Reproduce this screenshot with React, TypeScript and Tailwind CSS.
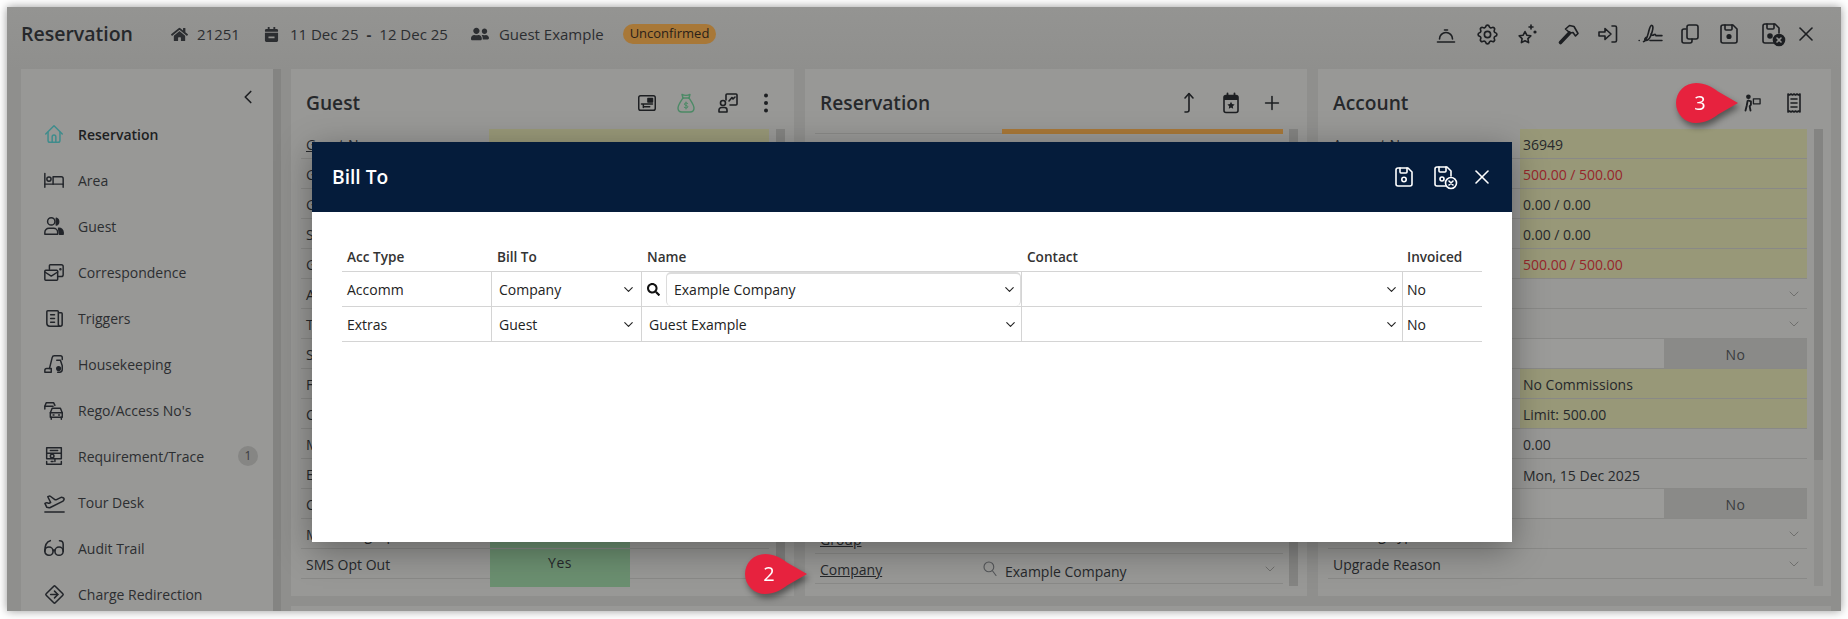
import { ReactNode } from 'react';
import { ChevronDown, ChevronLeft, Plus, X } from 'lucide-react';
import { FaCalendarMinus, FaHome, FaSearch, FaUserFriends } from 'react-icons/fa';
import { LuPlaneTakeoff } from 'react-icons/lu';
import { TbDirectionSign, TbNews, TbSettings } from 'react-icons/tb';

function Ico({ size = 22, sw = 1.6, children }: { size?: number; sw?: number; children: ReactNode }) {
  return (
    <svg
      width={size}
      height={size}
      viewBox="0 0 24 24"
      fill="none"
      stroke="currentColor"
      strokeWidth={sw}
      strokeLinecap="round"
      strokeLinejoin="round"
      aria-hidden="true"
    >
      {children}
    </svg>
  );
}

const SaveIcon = ({ dot }: { dot?: boolean }) => (
  <Ico size={24}>
    <path d="M6 3h10l4 4v12a2 2 0 0 1-2 2H6a2 2 0 0 1-2-2V5a2 2 0 0 1 2-2z" />
    <path d="M8 3v4a1 1 0 0 0 1 1h5a1 1 0 0 0 1-1V3" />
    {dot ? <circle cx="12" cy="14.5" r="1.8" fill="currentColor" /> : <circle cx="12" cy="14.5" r="2.2" />}
  </Ico>
);

const SaveCloseIcon = ({ dark }: { dark?: boolean }) => (
  <svg width="27" height="27" viewBox="0 0 27 27" fill="none" stroke="currentColor" strokeWidth="1.6" strokeLinecap="round" strokeLinejoin="round" aria-hidden="true">
    <path d="M15 22H6a2 2 0 0 1-2-2V5a2 2 0 0 1 2-2h10l4 4v5" />
    <path d="M8 3v4a1 1 0 0 0 1 1h5a1 1 0 0 0 1-1V3" />
    <circle cx="11" cy="15" r="2" fill={dark ? 'currentColor' : 'none'} />
    <circle cx="20" cy="19" r="5.5" fill={dark ? 'currentColor' : '#051c3b'} />
    <path d="M18 17l4 4m0-4l-4 4" stroke={dark ? '#929290' : 'currentColor'} />
  </svg>
);

const BellIcon = () => (
  <Ico size={24}>
    <path d="M5.5 17a6.5 6.5 0 0 1 13 0" />
    <path d="M10.5 8h3" />
    <path d="M3.5 20h17" />
  </Ico>
);

const StarsIcon = () => (
  <Ico size={24}>
    <path d="M10 9.5l1.8 3.7 4 .6-2.9 2.8.7 4-3.6-1.9-3.6 1.9.7-4-2.9-2.8 4-.6z" />
    <path d="M16 3v4M14 5h4" />
    <circle cx="20" cy="10" r=".8" fill="currentColor" />
  </Ico>
);

const HammerIcon = () => (
  <Ico size={24}>
    <path d="M4.500 20.500L13.500 11" strokeWidth="3.600" />
    <path d="M9.500 7l4-3.500 4.500 1 4 7-2.500 2.500-2.500-3.500-3 .5z" />
  </Ico>
);

const LoginIcon = () => (
  <Ico size={24}>
    <path d="M3 10h6V6.5l6 5.5-6 5.5V14H3z" />
    <path d="M16 4h3a1.5 1.5 0 0 1 1.5 1.5v13A1.5 1.5 0 0 1 19 20h-3" />
  </Ico>
);

const SignIcon = () => (
  <Ico size={26} sw={1.5}>
    <path d="M2 18h.01" />
    <path d="M6 19c2.500 0 3.500-4 4.500-8S12 4 13.500 4s1.500 2.500.5 6-3 8-5.500 8-1-3 1-3.500" />
    <path d="M13 12c.5 1.500 1.500 1.500 3 .5 1-.7 1 .5 1.500 1H23" />
    <path d="M12 18h11" />
  </Ico>
);

const CopyIcon = () => (
  <Ico size={24}>
    <path d="M8 7H6a2 2 0 0 0-2 2v10a2 2 0 0 0 2 2h6a2 2 0 0 0 2-2v-2" />
    <rect x="9" y="3" width="11" height="14" rx="2" />
  </Ico>
);

const CardIcon = () => (
  <Ico size={22}>
    <rect x="3" y="4" width="18" height="16" rx="2" />
    <rect x="13" y="7" width="5" height="4" fill="currentColor" />
    <path d="M6 13h12M8 16h7M8 13v4" />
  </Ico>
);

const BagIcon = () => (
  <Ico size={24} sw={1.4}>
    <path d="M9 7L8 3.5c2 1 6 1 8 0L15 7" />
    <path d="M9 7h6" />
    <path d="M9 7c-2 3-5 7-5 10 0 3 2 4 4 4h8c2 0 4-1 4-4 0-3-3-7-5-10" />
    <path d="M13.8 12.5c-.6-.9-3.4-1-3.4.6 0 1.700 3.500 1 3.500 2.700 0 1.500-2.800 1.500-3.700.5M12 11v7" strokeWidth="1" />
  </Ico>
);

const PersonChartIcon = () => (
  <Ico size={24}>
    <path d="M10 9V4a1 1 0 0 1 1-1h9a1 1 0 0 1 1 1v9a1 1 0 0 1-1 1h-6" />
    <path d="M13 10l3-3.500 1 1.500 2-2" />
    <circle cx="7" cy="12" r="2.500" />
    <path d="M3 21v-2a2.500 2.500 0 0 1 2.500-2.500h3A2.500 2.500 0 0 1 11 19v2z" />
  </Ico>
);

const DotsIcon = () => (
  <svg width="6" height="20" viewBox="0 0 6 20" fill="currentColor" aria-hidden="true">
    <circle cx="3" cy="2.500" r="2" />
    <circle cx="3" cy="10" r="2" />
    <circle cx="3" cy="17.500" r="2" />
  </svg>
);

const UpFootIcon = () => (
  <Ico size={24}>
    <path d="M8 7l4-4.500L16 7" />
    <path d="M12 3v16a2 2 0 0 1-2 2H8" />
  </Ico>
);

const CalStarIcon = () => (
  <svg width="24" height="24" viewBox="0 0 24 24" fill="none" aria-hidden="true">
    <rect x="5" y="4.500" width="14" height="17" rx="2" stroke="currentColor" strokeWidth="1.600" />
    <path d="M5 5h14v4H5z" fill="currentColor" />
    <path d="M8.500 2.500v3M15.500 2.500v3" stroke="currentColor" strokeWidth="1.800" strokeLinecap="round" />
    <path d="M12 10.800l1.100 2.300 2.500.3-1.800 1.800.4 2.500-2.200-1.200-2.200 1.200.4-2.500-1.800-1.800 2.500-.3z" fill="currentColor" />
  </svg>
);

const BellhopIcon = () => (
  <Ico size={20}>
    <circle cx="6.500" cy="4.500" r="2" fill="currentColor" />
    <path d="M6.500 9l3 1v4l-1.500 2 1 5M5.500 9.500L4.500 15 3 21" strokeWidth="2.200" />
    <rect x="12.500" y="7" width="8" height="6" />
  </Ico>
);

const ReceiptIcon = () => (
  <Ico size={24}>
    <path d="M6 3l1.500 1L9 3l1.500 1L12 3l1.500 1L15 3l1.500 1L18 3v18l-1.500-1-1.500 1-1.500-1-1.500 1-1.500-1L9 21l-1.500-1L6 21z" />
    <path d="M9 8h6M9 12h6M9 16h6" />
  </Ico>
);

const HouseIcon = () => (
  <Ico>
    <path d="M3 12l9-9 9 9" />
    <path d="M5.500 10v9a2 2 0 0 0 2 2h9a2 2 0 0 0 2-2v-9" />
    <path d="M10 21v-6a2 2 0 0 1 4 0v6" />
  </Ico>
);

const BedIcon = () => (
  <Ico>
    <path d="M2 5v15" />
    <path d="M2 16.500h20V20" />
    <path d="M11 16.500V8.500h9a2 2 0 0 1 2 2v6" />
    <circle cx="6.500" cy="11" r="2.300" />
  </Ico>
);

const PeopleIcon = () => (
  <Ico>
    <circle cx="9" cy="7" r="4" />
    <path d="M14.500 3.500a4 4 0 0 1 0 7.500z" fill="currentColor" />
    <path d="M2 21v-2a4.500 4.500 0 0 1 4.500-4.500h5A4.500 4.500 0 0 1 16 19v2z" />
    <path d="M17 14.500a4.500 4.500 0 0 1 5 4.500v2h-4z" fill="currentColor" />
  </Ico>
);

const CorrespondenceIcon = () => (
  <Ico>
    <path d="M7 9V5a1 1 0 0 1 1-1h12a2 2 0 0 1 2 2v9a2 2 0 0 1-2 2h-4" />
    <rect x="2" y="10" width="14" height="11" rx="1" />
    <path d="M2 12l7 4.500 7-4.500" />
    <circle cx="19" cy="9" r=".6" fill="currentColor" />
  </Ico>
);

const VacuumIcon = () => (
  <Ico>
    <path d="M7 17L10 5a2.500 2.500 0 0 1 2.500-2H19a2 2 0 0 1 2 2v2" />
    <path d="M2 21v-2a2 2 0 0 1 2-2h5v4z" />
    <path d="M15 8h4l2 6v4a3 3 0 0 1-3 3h-2" />
    <circle cx="17" cy="17" r="2" fill="currentColor" />
  </Ico>
);

const CarsIcon = () => (
  <Ico>
    <path d="M2 11V8l1.500-4h8L13 7" />
    <path d="M2 8h9" />
    <path d="M8 20v-5l2-5h9l2 5v5z" />
    <path d="M8 15h13" />
    <path d="M9 20v2M20 20v2" />
    <path d="M11 17.500h1M17 17.500h1" />
  </Ico>
);

const RequirementIcon = () => (
  <Ico>
    <path d="M4 3h16M4 3v6h16V3M4 9v6h16V9M4 21v-3M20 21v-3M4 21h16" />
    <circle cx="10" cy="12" r="2" />
    <path d="M8 6h8M13 15v3M9 18h2" />
  </Ico>
);

const GlassesIcon = () => (
  <Ico sw={1.7}>
    <circle cx="6.500" cy="15.500" r="4.500" />
    <circle cx="17.500" cy="15.500" r="4.500" />
    <path d="M2 15.500C2 10 4 5 8 4M22 15.500V8c0-2-1-4-4-4" />
    <path d="M11 15c.5-1 1.500-1 2 0" />
  </Ico>
);

const navItems: { label: string; icon: ReactNode; active?: boolean; badge?: string }[] = [
  { label: 'Reservation', icon: <HouseIcon />, active: true },
  { label: 'Area', icon: <BedIcon /> },
  { label: 'Guest', icon: <PeopleIcon /> },
  { label: 'Correspondence', icon: <CorrespondenceIcon /> },
  { label: 'Triggers', icon: <TbNews size={23} strokeWidth={1.6} /> },
  { label: 'Housekeeping', icon: <VacuumIcon /> },
  { label: "Rego/Access No's", icon: <CarsIcon /> },
  { label: 'Requirement/Trace', icon: <RequirementIcon />, badge: '1' },
  { label: 'Tour Desk', icon: <LuPlaneTakeoff size={23} strokeWidth={1.6} /> },
  { label: 'Audit Trail', icon: <GlassesIcon /> },
  { label: 'Charge Redirection', icon: <TbDirectionSign size={23} strokeWidth={1.6} /> },
];

function Callout({ n, className }: { n: string; className: string }) {
  return (
    <div className={`absolute w-[62px] h-[40px] drop-shadow-[2px_4px_3px_rgba(0,0,0,0.45)] ${className}`}>
      <svg width="62" height="40" viewBox="0 0 62 40" aria-hidden="true">
        <path d="M20 0C29 0 36 4 42 8.500L62 20 42 31.500C36 36 29 40 20 40A20 20 0 0 1 20 0Z" fill="#e7223e" />
      </svg>
      <span className="absolute left-[18px] top-[5px] w-[12px] text-center text-[20px] leading-[30px] font-medium text-white">{n}</span>
    </div>
  );
}

function Row({ label, link, children, labelW, className = '' }: { label?: string; link?: boolean; children?: ReactNode; labelW: string; className?: string }) {
  return (
    <div className={`flex h-[30px] items-start border-b border-[#898987] text-[14px] leading-[31px] ${className}`}>
      <div className={`${labelW} shrink-0 pl-[5px] whitespace-nowrap overflow-hidden ${link ? 'underline' : ''}`}>{label}</div>
      <div className="flex-1 min-w-0 flex h-full">{children}</div>
    </div>
  );
}

function Scroll({ thumb }: { thumb: string }) {
  return (
    <div className="w-[9px] h-[457px] shrink-0 bg-[#8f8f8d]">
      <div className={`w-full bg-[#848482] ${thumb}`} />
    </div>
  );
}

function Yellow({ children, red }: { children?: ReactNode; red?: boolean }) {
  return <div className={`flex-1 h-full bg-[#989878] pl-[3px] ${red ? 'text-[#96262b]' : ''}`}>{children}</div>;
}

function Caret() {
  return <div className="flex-1 flex justify-end items-center pr-[5px] h-full text-[#6f6f6d]"><ChevronDown size={16} strokeWidth={1.5} /></div>;
}

function NoCell() {
  return (
    <>
      <div className="w-[144px] h-full bg-[#9b9b99]" />
      <div className="flex-1 h-full bg-[#8a8a88] text-center text-[#3a3c3e] tracking-[0.5px]">No</div>
    </>
  );
}

const guestRows = ['Guest No', 'Given Name', 'Group', 'Surname', 'Gender', 'Address', 'Title', 'State', 'Fax', 'Country', 'Mobile', 'Email', 'Company', 'Marketing Opt Out'];

function TableRow({ children }: { children: ReactNode }) {
  return <div className="grid grid-cols-[150px_150px_380px_381px_79px] border-b border-[#d4d4d4] h-[35px]">{children}</div>;
}

function SelectCell({ text, first }: { text?: string; first?: boolean }) {
  return (
    <div className={`flex items-center justify-between border-r border-[#d4d4d4] ${first ? 'pl-[7px] pr-[5px]' : 'pl-[7px] pr-[3px]'}`}>
      <span>{text}</span>
      <ChevronDown size={15} strokeWidth={1.8} />
    </div>
  );
}

export default function App() {
  return (
    <div className="w-[1848px] h-[619px] bg-white p-[7px] font-['Open_Sans',sans-serif] text-[#26282b] overflow-hidden">
      <div className="relative w-[1834px] h-[604px] bg-[#8f8f8d] shadow-[0_0_9px_rgba(0,0,0,0.4)] overflow-hidden">
        {/* top bar */}
        <header className="h-[62px] pb-[8px] flex items-center pl-[14px] pr-[23px] bg-gradient-to-b from-[#949492] to-[#8f8f8d]">
          <h1 className="w-[150px] text-[19.5px] font-semibold">Reservation</h1>
          <div className="flex items-center text-[15px] text-[#2c2e31]">
            <FaHome size={17} />
            <span className="ml-[9px]">21251</span>
            <span className="ml-[24px]"><FaCalendarMinus size={15} /></span>
            <span className="ml-[11px]">11 Dec 25</span>
            <span className="mx-[8px] font-bold">-</span>
            <span>12 Dec 25</span>
            <span className="ml-[23px]"><FaUserFriends size={18} /></span>
            <span className="ml-[10px]">Guest Example</span>
            <span className="ml-[19px] h-[20px] px-[7px] rounded-full bg-[#a87838] text-[13px] leading-[19px] font-medium text-[#2a2118]">Unconfirmed</span>
          </div>
          <div className="ml-auto flex items-center text-[#1d1f22]">
            <span className="w-[44px] flex justify-center"><BellIcon /></span>
            <span className="w-[38px] flex justify-center"><TbSettings size={25} strokeWidth={1.6} /></span>
            <span className="w-[42px] flex justify-center"><StarsIcon /></span>
            <span className="w-[40px] flex justify-center"><HammerIcon /></span>
            <span className="w-[40px] flex justify-center"><LoginIcon /></span>
            <span className="w-[44px] flex justify-center"><SignIcon /></span>
            <span className="w-[36px] flex justify-center"><CopyIcon /></span>
            <span className="w-[42px] flex justify-center"><SaveIcon dot /></span>
            <span className="w-[44px] flex justify-center"><SaveCloseIcon dark /></span>
            <span className="w-[24px] flex justify-center"><X size={24} strokeWidth={1.6} /></span>
          </div>
        </header>

        <div className="flex pl-[14px] pr-[10px] gap-[10px]">
          {/* side nav */}
          <aside className="w-[260px] h-[542px] flex shrink-0">
            <div className="w-[252px] bg-[#989896] relative">
              <div className="h-[39px] flex justify-end items-end pr-[14px] text-[#1d1f22]">
                <ChevronLeft size={22} strokeWidth={1.8} />
              </div>
              <nav className="pt-[3px]">
                {navItems.map((item) => (
                  <div key={item.label} className="relative h-[46px] flex items-center pl-[22px] text-[14px] text-[#2c2e31]">
                    <span className={`w-[35px] ${item.active ? 'text-[#3f8c8c]' : 'text-[#22252a]'}`}>{item.icon}</span>
                    <span className={item.active ? 'font-semibold text-[#1d1f22]' : ''}>{item.label}</span>
                    {item.badge && (
                      <span className="absolute left-[217px] w-[20px] h-[20px] rounded-full bg-[#868684] text-center text-[12px] leading-[20px] text-[#3a3c3e]">{item.badge}</span>
                    )}
                  </div>
                ))}
              </nav>
            </div>
            <div className="w-[8px] bg-[#848482]" />
          </aside>

          <div className="flex-1 flex flex-col gap-[10px] min-w-0">
            <div className="flex gap-[11px] h-[527px]">
              {/* guest */}
              <section className="w-[503px] bg-[#989896] pl-[10px]">
                <div className="h-[60px] pt-[8px] flex items-center pl-[5px]">
                  <h2 className="text-[19.2px] font-semibold flex-1">Guest</h2>
                  <div className="flex items-center text-[#1d1f22]">
                    <CardIcon />
                    <span className="ml-[16px] text-[#4c8a66]"><BagIcon /></span>
                    <span className="ml-[18px]"><PersonChartIcon /></span>
                    <span className="ml-[23px] mr-[25px]"><DotsIcon /></span>
                  </div>
                </div>
                <div className="flex gap-[7px]">
                  <div className="w-[468px]">
                    {guestRows.map((label, i) => (
                      <Row key={label} label={label} link={i === 0} labelW="w-[188px]">
                        {i === 13 ? <div className="ml-[1px] w-[140px] h-full bg-[#6b8f70]" /> : <Yellow />}
                      </Row>
                    ))}
                    <Row label="SMS Opt Out" labelW="w-[188px]">
                      <div className="ml-[1px] w-[140px] h-[38px] bg-[#6b8f70] text-center leading-[28px] tracking-[0.5px]">Yes</div>
                    </Row>
                  </div>
                  <Scroll thumb="h-[457px]" />
                </div>
              </section>

              {/* reservation */}
              <section className="w-[502px] bg-[#989896] pl-[10px]">
                <div className="h-[60px] pt-[8px] flex items-center pl-[5px]">
                  <h2 className="text-[19.2px] font-semibold flex-1">Reservation</h2>
                  <div className="flex items-center text-[#1d1f22]">
                    <UpFootIcon />
                    <span className="ml-[18px]"><CalStarIcon /></span>
                    <span className="ml-[18px] mr-[24px]"><Plus size={22} strokeWidth={1.7} /></span>
                  </div>
                </div>
                <div className="flex gap-[6px]">
                  <div className="w-[468px]">
                    <div className="flex h-[5px] border-b border-[#898987]">
                      <div className="ml-[187px] flex-1 bg-[#a87838] h-[5px]" />
                    </div>
                    {Array.from({ length: 13 }, (_, i) => (
                      <Row key={i} labelW="w-[187px]" />
                    ))}
                    <Row label="Group" link labelW="w-[187px]" />
                    <Row label="Company" link labelW="w-[187px]">
                      <span className="absolute ml-[-21px] mt-[5px] text-[#55575a]"><SearchOutline /></span>
                      <span className="pl-[3px] pt-[2px]">Example Company</span>
                      <Caret />
                    </Row>
                  </div>
                  <Scroll thumb="h-[457px]" />
                </div>
              </section>

              {/* account */}
              <section className="w-[513px] bg-[#989896] pl-[10px]">
                <div className="h-[60px] pt-[8px] flex items-center pl-[5px]">
                  <h2 className="text-[19.2px] font-semibold flex-1">Account</h2>
                  <div className="flex items-center text-[#1d1f22]">
                    <BellhopIcon />
                    <span className="ml-[19px] mr-[25px]"><ReceiptIcon /></span>
                  </div>
                </div>
                <div className="flex gap-[7px]">
                  <div className="w-[479px]">
                    <Row label="Account No" link labelW="w-[192px]"><Yellow>36949</Yellow></Row>
                    <Row labelW="w-[192px]"><Yellow red>500.00 / 500.00</Yellow></Row>
                    <Row labelW="w-[192px]"><Yellow>0.00 / 0.00</Yellow></Row>
                    <Row labelW="w-[192px]"><Yellow>0.00 / 0.00</Yellow></Row>
                    <Row labelW="w-[192px]"><Yellow red>500.00 / 500.00</Yellow></Row>
                    <Row labelW="w-[192px]"><Caret /></Row>
                    <Row labelW="w-[192px]"><Caret /></Row>
                    <Row labelW="w-[192px]"><NoCell /></Row>
                    <Row labelW="w-[192px]"><Yellow>No Commissions</Yellow></Row>
                    <Row labelW="w-[192px]"><Yellow>Limit: 500.00</Yellow></Row>
                    <Row labelW="w-[192px]"><div className="pl-[3px]">0.00</div></Row>
                    <Row labelW="w-[192px]"><div className="pl-[3px] pt-[1px]">Mon, 15 Dec 2025</div></Row>
                    <Row labelW="w-[192px]"><NoCell /></Row>
                    <Row label="Booking Type" labelW="w-[192px]"><Caret /></Row>
                    <Row label="Upgrade Reason" labelW="w-[192px]"><Caret /></Row>
                  </div>
                  <Scroll thumb="h-[331px]" />
                </div>
              </section>
            </div>
            <div className="h-[10px] bg-[#989896]" />
          </div>
        </div>

        {/* bill to dialog */}
        <div className="absolute left-[305px] top-[135px] w-[1200px] h-[400px] bg-white shadow-[0_8px_32px_rgba(0,0,0,0.35)] text-[14px] text-[#222]">
          <div className="h-[70px] bg-[#051c3b] flex items-center pl-[20px] pr-[18px] text-white">
            <h2 className="flex-1 text-[19.2px] font-semibold">Bill To</h2>
            <SaveIcon />
            <span className="ml-[15px]"><SaveCloseIcon /></span>
            <span className="ml-[12px]"><X size={24} strokeWidth={1.6} /></span>
          </div>
          <div className="mx-[30px] mt-[31px]">
            <div className="grid grid-cols-[150px_150px_380px_381px_79px] h-[29px] border-b border-[#d4d4d4] text-[13.6px] font-semibold text-[#333] leading-[28px]">
              <div className="pl-[5px]">Acc Type</div>
              <div className="pl-[5px]">Bill To</div>
              <div className="pl-[5px]">Name</div>
              <div className="pl-[5px]">Contact</div>
              <div className="pl-[4px]">Invoiced</div>
            </div>
            <TableRow>
              <div className="flex items-center pl-[5px] border-r border-[#d4d4d4]">Accomm</div>
              <SelectCell text="Company" first />
              <div className="flex items-center border-r border-[#d4d4d4] pl-[5px]">
                <FaSearch size={13} className="shrink-0 text-[#111]" />
                <div className="ml-[6px] flex-1 h-full flex items-center justify-between rounded-[5px] border-t-2 border-l border-r border-[#dcdcdc] pl-[7px] pr-[3px] pb-[2px]">
                  <span>Example Company</span>
                  <ChevronDown size={15} strokeWidth={1.8} />
                </div>
              </div>
              <SelectCell />
              <div className="flex items-center pl-[4px]">No</div>
            </TableRow>
            <TableRow>
              <div className="flex items-center pl-[5px] border-r border-[#d4d4d4]">Extras</div>
              <SelectCell text="Guest" first />
              <SelectCell text="Guest Example" />
              <SelectCell />
              <div className="flex items-center pl-[4px]">No</div>
            </TableRow>
          </div>
        </div>

        <Callout n="2" className="left-[738px] top-[547px]" />
        <Callout n="3" className="left-[1669px] top-[76px]" />
      </div>
    </div>
  );
}

function SearchOutline() {
  return (
    <Ico size={18} sw={1.5}>
      <circle cx="10.500" cy="10.500" r="6.500" />
      <path d="M15.500 16l4.500 6" />
    </Ico>
  );
}
